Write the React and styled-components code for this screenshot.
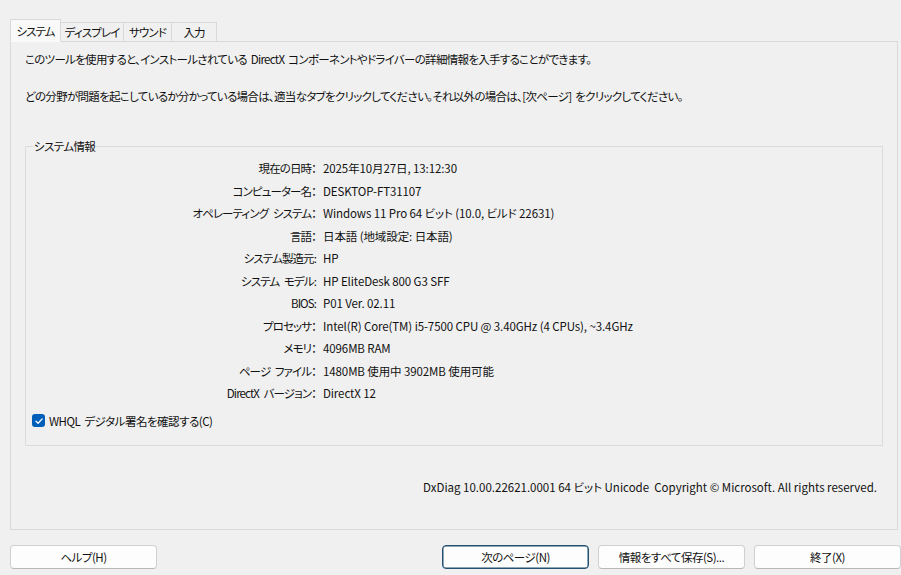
import { styled, createGlobalStyle } from "styled-components";

const GlobalStyle = createGlobalStyle`
  html, body {
    margin: 0;
    padding: 0;
    background: #f0f0f0;
  }
  body {
    font-family: "Noto Sans CJK JP", "Noto Sans", sans-serif;
    font-size: 11.5px;
    color: #111;
    font-feature-settings: "palt";
  }
`;

const tabs = [
  { name: "システム", width: 51 },
  { name: "ディスプレイ", width: 63 },
  { name: "サウンド", width: 48 },
  { name: "入力", width: 45 },
];

const rows = [
  ["現在の日時：", "2025年10月27日, 13:12:30"],
  ["コンピューター名：", "DESKTOP-FT31107"],
  ["オペレーティング システム：", "Windows 11 Pro 64 ビット (10.0, ビルド 22631)"],
  ["言語：", "日本語 (地域設定: 日本語)"],
  ["システム製造元:", "HP"],
  ["システム モデル:", "HP EliteDesk 800 G3 SFF"],
  ["BIOS:", "P01 Ver. 02.11"],
  ["プロセッサ：", "Intel(R) Core(TM) i5-7500 CPU @ 3.40GHz (4 CPUs), ~3.4GHz"],
  ["メモリ：", "4096MB RAM"],
  ["ページ ファイル：", "1480MB 使用中 3902MB 使用可能"],
  ["DirectX バージョン：", "DirectX 12"],
];

const App = () => {
  return (
    <Window>
      <GlobalStyle />
      <TabStrip>
        {tabs.map((t, i) => (
          <Tab key={t.name} $active={i === 0} $width={t.width}>
            {t.name}
          </Tab>
        ))}
      </TabStrip>
      <Panel>
        <Intro>
          このツールを使用すると、インストールされている DirectX
          コンポーネントやドライバーの詳細情報を入手することができます。
        </Intro>
        <Intro $second>
          どの分野が問題を起こしているか分かっている場合は、適当なタブをクリックしてください。それ以外の場合は、[次ページ]
          をクリックしてください。
        </Intro>
        <Group>
          <Legend>システム情報</Legend>
          <InfoGrid>
            {rows.map(([label, value]) => (
              <InfoRow key={label}>
                <Label>{label}</Label>
                <Value>{value}</Value>
              </InfoRow>
            ))}
          </InfoGrid>
          <CheckRow>
            <CheckBox>
              <svg width="12" height="12" viewBox="0 0 12 12">
                <path
                  d="M3 6.2 L5.1 8.2 L9.2 3.9"
                  fill="none"
                  stroke="#fff"
                  strokeWidth="1.3"
                  strokeLinecap="round"
                  strokeLinejoin="round"
                />
              </svg>
            </CheckBox>
            WHQL デジタル署名を確認する(C)
          </CheckRow>
        </Group>
        <Footer>
          DxDiag 10.00.22621.0001 64 ビット Unicode&nbsp;&nbsp;Copyright © Microsoft. All rights
          reserved.
        </Footer>
      </Panel>
      <ButtonBar>
        <Button>ヘルプ(H)</Button>
        <RightButtons>
          <Button $focused>次のページ(N)</Button>
          <Button>情報をすべて保存(S)...</Button>
          <Button>終了(X)</Button>
        </RightButtons>
      </ButtonBar>
    </Window>
  );
};

export default App;

const Window = styled.div`
  width: 901px;
  height: 575px;
  box-sizing: border-box;
  padding: 20px 3px 0 10px;
  display: flex;
  flex-direction: column;
`;

const TabStrip = styled.div`
  display: flex;
  align-items: flex-end;
  height: 22px;
  margin-bottom: -1px;
  position: relative;
  z-index: 1;
`;

const Tab = styled.div`
  box-sizing: border-box;
  width: ${(p) => p.$width}px;
  height: ${(p) => (p.$active ? "23px" : "20px")};
  display: flex;
  align-items: center;
  justify-content: center;
  border: 1px solid #d9d9d9;
  border-bottom: ${(p) => (p.$active ? "1px solid #f9f9f9" : "1px solid #d9d9d9")};
  border-left: ${(p) => (p.$active ? "1px solid #d9d9d9" : "none")};
  background: ${(p) => (p.$active ? "#f9f9f9" : "#f0f0f0")};
  line-height: 18px;
  letter-spacing: -0.9px;
  white-space: nowrap;
`;

const Panel = styled.div`
  box-sizing: border-box;
  height: 489px;
  border: 1px solid #d9d9d9;
  padding: 8px 14px 0 14px;
  display: flex;
  flex-direction: column;
`;

const Intro = styled.p`
  margin: ${(p) => (p.$second ? "19px 0 0 0" : "0")};
  line-height: 18px;
  letter-spacing: -0.7px;
  word-spacing: 2px;
  white-space: nowrap;
`;

const Group = styled.fieldset`
  margin: 32px 0 0 0;
  padding: 2px 6px 15px 6px;
  border: 1px solid #dcdcdc;
  min-width: 0;
`;

const Legend = styled.legend`
  margin-left: 1px;
  padding: 0 1px;
  line-height: 18px;
  letter-spacing: -0.6px;
`;

const InfoGrid = styled.div`
  display: flex;
  flex-direction: column;
`;

const InfoRow = styled.div`
  display: grid;
  grid-template-columns: 284px 1fr;
  column-gap: 7px;
  height: 22.5px;
  align-items: center;
  white-space: nowrap;
`;

const Label = styled.span`
  text-align: right;
  letter-spacing: -0.9px;
  word-spacing: 3px;
`;

const Value = styled.span`
  letter-spacing: -0.1px;
`;

const CheckRow = styled.div`
  margin-top: 7px;
  display: flex;
  align-items: center;
  gap: 4px;
  line-height: 18px;
  letter-spacing: -0.5px;
  word-spacing: 2px;
`;

const CheckBox = styled.span`
  width: 13px;
  height: 13px;
  border-radius: 3px;
  background: #005fb8;
  display: flex;
  align-items: center;
  justify-content: center;
`;

const Footer = styled.div`
  margin-top: 32px;
  padding-right: 6px;
  text-align: right;
  line-height: 18px;
  white-space: nowrap;
`;

const ButtonBar = styled.div`
  margin-top: 15px;
  display: flex;
  justify-content: space-between;
  margin-right: -3px;
`;

const RightButtons = styled.div`
  display: flex;
  gap: 9px;
`;

const Button = styled.button`
  box-sizing: border-box;
  width: 147px;
  height: 24px;
  border-radius: 4px;
  font-family: inherit;
  font-size: 11.5px;
  font-feature-settings: "palt";
  letter-spacing: -0.5px;
  color: #111;
  background: #fdfdfd;
  border: 1px solid ${(p) => (p.$focused ? "#23506f" : "#d0d0d0")};
  border-bottom-color: ${(p) => (p.$focused ? "#23506f" : "#b8b8b8")};
  box-shadow: ${(p) => (p.$focused ? "inset 0 0 0 0.5px #23506f" : "none")};
  padding: 0;
`;
